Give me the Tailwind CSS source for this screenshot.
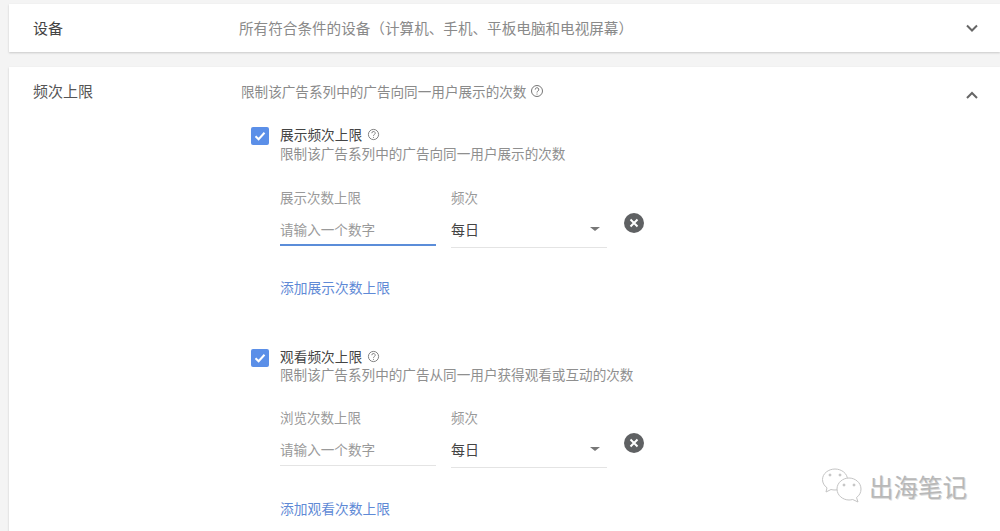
<!DOCTYPE html>
<html lang="zh">
<head>
    <meta charset="UTF-8">
    <title>频次上限</title>
    <script src="https://cdn.jsdelivr.net/npm/@tailwindcss/browser@4"></script>
</head>
<body class="bg-[#f4f4f4] h-[531px] overflow-hidden font-['Noto_Sans_CJK_SC','Noto_Sans',sans-serif] text-[#3c4043]">
    <div class="relative h-[531px] pl-[9px] pt-[4px] overflow-hidden">
        <!-- Device row -->
        <section class="bg-white h-[48px] flex items-center shadow-[0_1px_2px_rgba(0,0,0,0.18)]">
            <div class="w-[230px] pl-[24px] text-[15px] text-[#444]">设备</div>
            <div class="flex-1 text-[14.6px] text-[#8a8a8a]">所有符合条件的设备（计算机、手机、平板电脑和电视屏幕）</div>
            <svg class="w-[14px] h-[9px] mr-[21px]" viewBox="0 0 14 9" fill="none" stroke="#666" stroke-width="2"><path d="M2 1.500 7 6.500 12 1.500"/></svg>
        </section>

        <!-- Frequency cap card -->
        <section class="bg-white mt-[15px] h-[470px] flex shadow-[0_1px_2px_rgba(0,0,0,0.18)]">
            <div class="w-[232px] pl-[24px] pt-[14px] text-[15px] text-[#555] leading-[20px]">频次上限</div>
            <div class="flex-1 pt-[14px]">
                <div class="flex items-center h-[20px] text-[13.6px] text-[#8a8a8a]">
                    限制该广告系列中的广告向同一用户展示的次数
                    <svg class="w-[14px] h-[14px] ml-[4px]" viewBox="0 0 14 14" fill="none" stroke="#777" stroke-width="1"><circle cx="7" cy="7" r="5.500"/><path d="M5.200 5.600a1.800 1.800 0 1 1 2.700 1.500c-.6.4-.9.7-.9 1.400"/><path d="M7 9.600v1"/></svg>
                </div>

                <!-- Impressions -->
                <div class="mt-[25px] ml-[10px] flex">
                    <span class="w-[18px] h-[18px] mt-[1px] rounded-[2px] bg-[#5b8fe8] flex items-center justify-center shrink-0">
                        <svg class="w-[14px] h-[14px]" viewBox="0 0 14 14" fill="none" stroke="#fff" stroke-width="2"><path d="M2.500 7.200 5.600 10.200 11.500 3.800"/></svg>
                    </span>
                    <div class="ml-[11px]">
                        <div class="flex items-center h-[17px] leading-[17px] text-[13.7px] text-[#444]">
                            展示频次上限
                            <svg class="w-[13px] h-[13px] ml-[5px]" viewBox="0 0 14 14" fill="none" stroke="#777" stroke-width="1"><circle cx="7" cy="7" r="5.500"/><path d="M5.200 5.600a1.800 1.800 0 1 1 2.700 1.500c-.6.4-.9.7-.9 1.400"/><path d="M7 9.600v1"/></svg>
                        </div>
                        <div class="mt-[1px] h-[18px] leading-[18px] text-[13.6px] text-[#8f8f8f]">限制该广告系列中的广告向同一用户展示的次数</div>
                    </div>
                </div>
                <div class="mt-[25px] ml-[39px] flex items-start">
                    <div class="w-[156px]">
                        <div class="h-[20px] leading-[20px] text-[13.5px] text-[#9a9a9a]">展示次数上限</div>
                        <div class="mt-[12px] h-[27px] leading-[20px] text-[13.6px] text-[#9a9a9a] border-b-2 border-[#5b8dd9]">请输入一个数字</div>
                    </div>
                    <div class="ml-[15px] w-[156px]">
                        <div class="h-[20px] leading-[20px] text-[13.5px] text-[#9a9a9a]">频次</div>
                        <div class="mt-[12px] h-[29px] flex items-start justify-between text-[14px] leading-[20px] text-[#444] border-b border-[#e4e4e4]">
                            每日
                            <span class="mt-[8px] mr-[7px] border-x-[5px] border-t-[4px] border-x-transparent border-t-[#777]"></span>
                        </div>
                    </div>
                    <span class="ml-[17px] mt-[26px] w-[20px] h-[20px] rounded-full bg-[#5f6163] flex items-center justify-center">
                        <svg class="w-[10px] h-[10px]" viewBox="0 0 10 10" stroke="#fff" stroke-width="2"><path d="M1.500 1.500 8.500 8.500M8.500 1.500 1.500 8.500"/></svg>
                    </span>
                </div>
                <div class="mt-[29px] ml-[39px] h-[20px] leading-[20px] text-[13.75px] text-[#5f8ad6]">添加展示次数上限</div>

                <!-- Views -->
                <div class="mt-[51px] ml-[10px] flex">
                    <span class="w-[18px] h-[18px] mt-[1px] rounded-[2px] bg-[#5b8fe8] flex items-center justify-center shrink-0">
                        <svg class="w-[14px] h-[14px]" viewBox="0 0 14 14" fill="none" stroke="#fff" stroke-width="2"><path d="M2.500 7.200 5.600 10.200 11.500 3.800"/></svg>
                    </span>
                    <div class="ml-[11px]">
                        <div class="flex items-center h-[17px] leading-[17px] text-[13.7px] text-[#444]">
                            观看频次上限
                            <svg class="w-[13px] h-[13px] ml-[5px]" viewBox="0 0 14 14" fill="none" stroke="#777" stroke-width="1"><circle cx="7" cy="7" r="5.500"/><path d="M5.200 5.600a1.800 1.800 0 1 1 2.700 1.500c-.6.4-.9.7-.9 1.400"/><path d="M7 9.600v1"/></svg>
                        </div>
                        <div class="h-[18px] leading-[18px] text-[13.6px] text-[#8f8f8f]">限制该广告系列中的广告从同一用户获得观看或互动的次数</div>
                    </div>
                </div>
                <div class="mt-[24px] ml-[39px] flex items-start">
                    <div class="w-[156px]">
                        <div class="h-[20px] leading-[20px] text-[13.5px] text-[#9a9a9a]">浏览次数上限</div>
                        <div class="mt-[12px] h-[27px] leading-[20px] text-[13.6px] text-[#9a9a9a] border-b border-[#e4e4e4]">请输入一个数字</div>
                    </div>
                    <div class="ml-[15px] w-[156px]">
                        <div class="h-[20px] leading-[20px] text-[13.5px] text-[#9a9a9a]">频次</div>
                        <div class="mt-[12px] h-[29px] flex items-start justify-between text-[14px] leading-[20px] text-[#444] border-b border-[#e4e4e4]">
                            每日
                            <span class="mt-[8px] mr-[7px] border-x-[5px] border-t-[4px] border-x-transparent border-t-[#777]"></span>
                        </div>
                    </div>
                    <span class="ml-[17px] mt-[26px] w-[20px] h-[20px] rounded-full bg-[#5f6163] flex items-center justify-center">
                        <svg class="w-[10px] h-[10px]" viewBox="0 0 10 10" stroke="#fff" stroke-width="2"><path d="M1.500 1.500 8.500 8.500M8.500 1.500 1.500 8.500"/></svg>
                    </span>
                </div>
                <div class="mt-[30px] ml-[39px] h-[20px] leading-[20px] text-[13.75px] text-[#5f8ad6]">添加观看次数上限</div>
            </div>
            <svg class="w-[14px] h-[9px] mt-[24px] mr-[21px]" viewBox="0 0 14 9" fill="none" stroke="#666" stroke-width="2"><path d="M2 7 7 2 12 7"/></svg>
        </section>

        <!-- Watermark lies over the card -->
        <div class="absolute left-[821px] top-[468px] flex items-center">
            <svg class="w-[42px] h-[36px]" viewBox="0 0 42 36" fill="#fff" stroke="#c4c4c4" stroke-width="1">
                <path d="M14 1C7.500 1 1.500 5.500 1.500 11.500c0 3.500 1.800 6.300 4.500 8.300L5 24l5-2.500c1.500.4 2.500.5 4 .5 6.500 0 12.500-4.500 12.500-10.500S20.500 1 14 1Z"/>
                <path d="M28 10c-6 0-12 4.500-12 11s6 11 12 11c1.300 0 2.500-.2 3.700-.5L37 34l-1.500-4.500c3-2 4.500-5 4.500-8.500 0-6.500-6-11-12-11Z"/>
                <circle cx="9" cy="7" r="1" fill="#c4c4c4"/><circle cx="19" cy="7" r="1" fill="#c4c4c4"/>
                <circle cx="23" cy="17" r="1" fill="#c4c4c4"/><circle cx="33" cy="17" r="1" fill="#c4c4c4"/>
            </svg>
            <span class="ml-[6px] mt-[2px] text-[24.5px] leading-[30px] text-[#b8b8b8] [text-shadow:1px_1px_0_#dcdcdc]">出海笔记</span>
        </div>
    </div>
</body>
</html>
